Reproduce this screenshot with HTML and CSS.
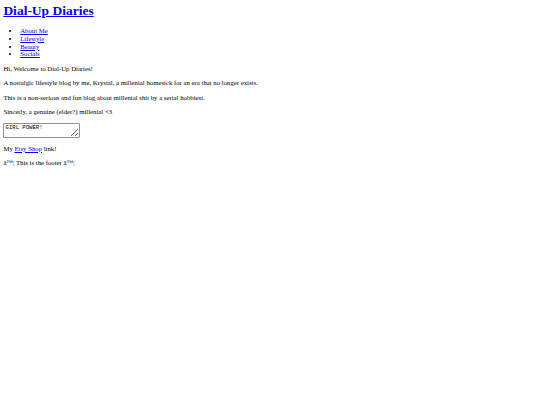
FILE: index.html
```html
<!DOCTYPE html>
<html>
<head>
<meta charset="utf-8">
<title>Dial-Up Diaries</title>
<link rel="stylesheet" href="styles.css">
</head>
<body>
<header class="site-header">
  <h1 class="site-title"><a href="#">Dial-Up Diaries</a></h1>
  <nav>
    <ul class="nav-list">
      <li><a href="#">About Me</a></li>
      <li><a href="#">Lifestyle</a></li>
      <li><a href="#">Beauty</a></li>
      <li><a href="#">Socials</a></li>
    </ul>
  </nav>
</header>
<main>
  <p>Hi, Welcome to Dial-Up Diaries!</p>
  <p>A nostalgic lifestyle blog by me, Krystal, a millenial homesick for an era that no longer exists.</p>
  <p>This is a non-serious and fun blog about millenial shit by a serial hobbiest.</p>
  <p>Sincerly, a genuine (elder?) millenial &lt;3</p>
  <textarea class="note">GIRL POWER!</textarea>
  <p>My <a href="#">Etsy Shop</a> link!</p>
</main>
<footer class="site-footer">
  <p>â™¦ This is the footer â™¦</p>
</footer>
</body>
</html>
```
FILE: styles.css
```css
html {
  background: #ffffff;
}
body {
  margin: 3.375px;
  font-family: "Liberation Serif", "Times New Roman", serif;
  font-size: 6.75px;
  line-height: 7.77px;
  color: #000000;
}
a {
  color: #0000ee;
}
.site-title {
  font-family: "Liberation Serif", "Times New Roman", serif;
  font-size: 13.5px;
  line-height: 15.6px;
  font-weight: bold;
  margin: 0 0 8px;
}
.nav-list {
  margin: 6.75px 0;
  padding-left: 16.875px;
}
p {
  margin: 6.75px 0;
}
.note {
  display: block;
  box-sizing: border-box;
  width: 77px;
  height: 15px;
  margin: 0;
  padding: 1px 1.2px;
  font-family: "Liberation Mono", "Courier New", monospace;
  font-size: 5.6px;
  line-height: 6.5px;
  color: #000000;
  background: #ffffff;
  border: 1px solid #8f8f8f;
  border-radius: 1px;
  resize: both;
}
```
